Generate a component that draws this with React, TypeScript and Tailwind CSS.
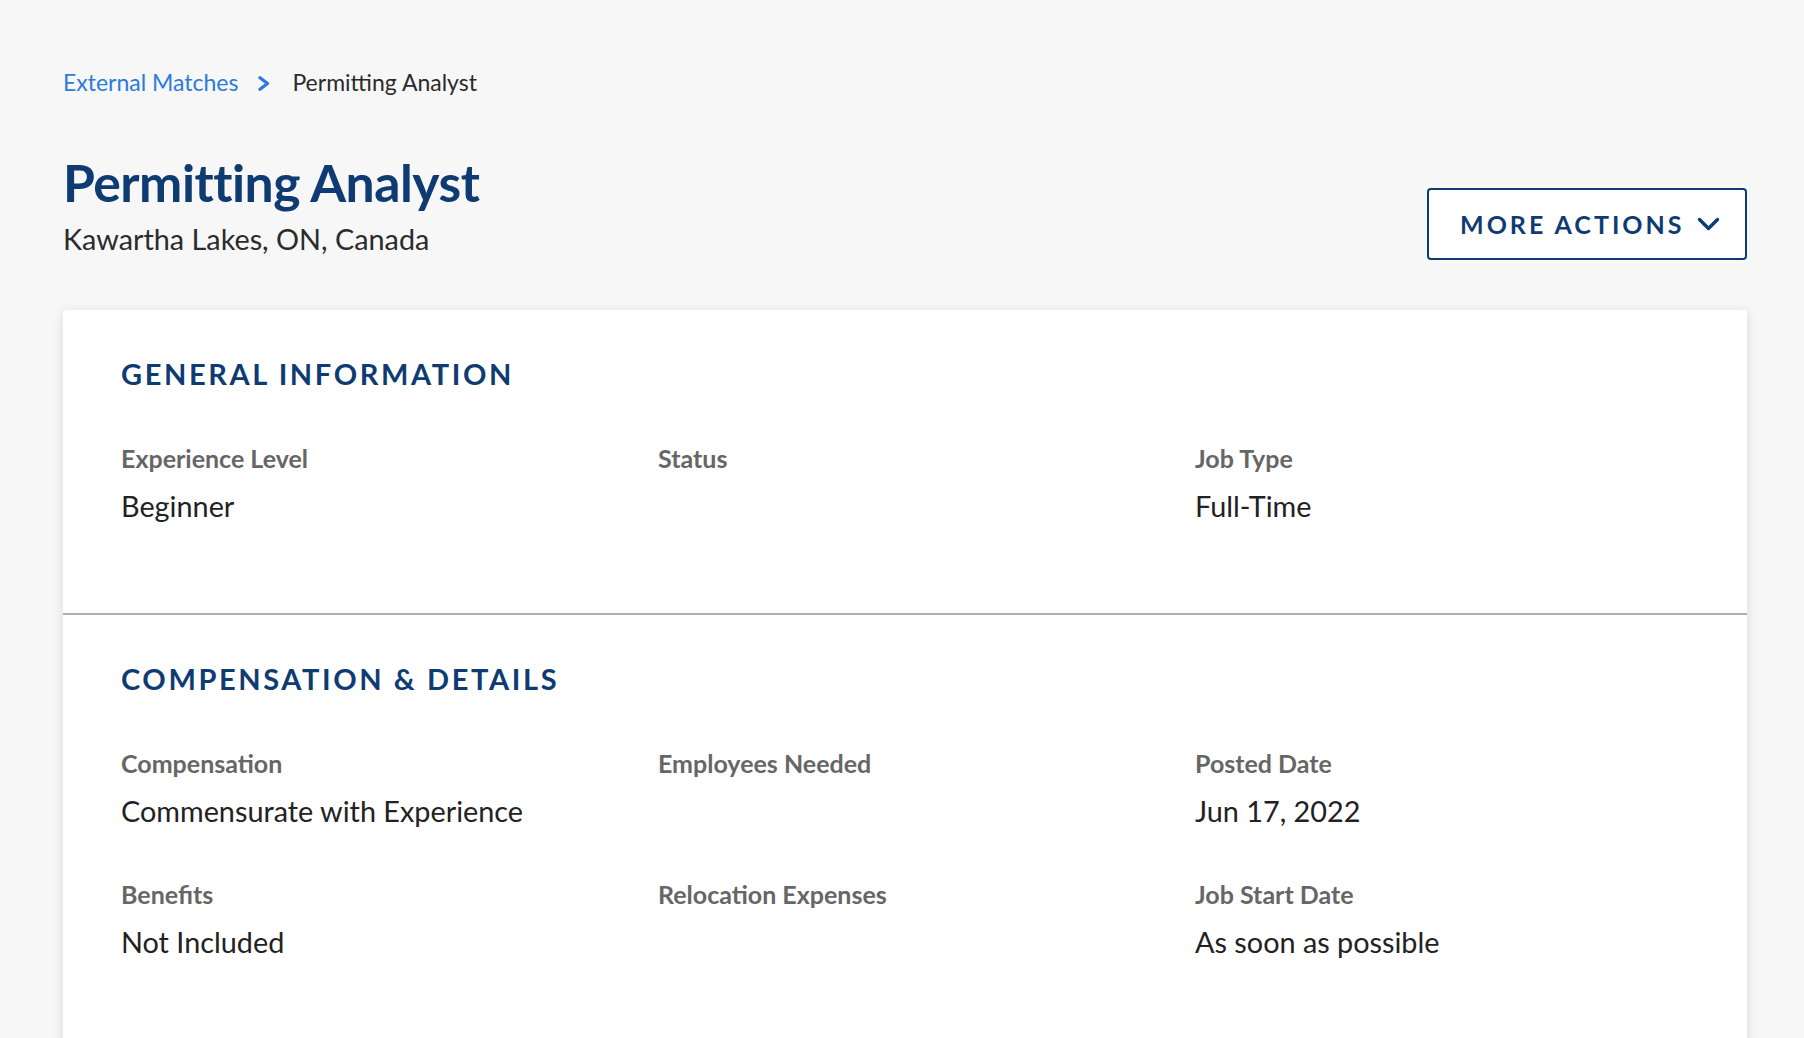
type Field = { label: string; value?: string };

const general: Field[] = [
  { label: 'Experience Level', value: 'Beginner' },
  { label: 'Status' },
  { label: 'Job Type', value: 'Full-Time' },
];

const compensation: Field[] = [
  { label: 'Compensation', value: 'Commensurate with Experience' },
  { label: 'Employees Needed' },
  { label: 'Posted Date', value: 'Jun 17, 2022' },
  { label: 'Benefits', value: 'Not Included' },
  { label: 'Relocation Expenses' },
  { label: 'Job Start Date', value: 'As soon as possible' },
];

function Section({ title, fields, divided }: { title: string; fields: Field[]; divided?: boolean }) {
  return (
    <section className={`px-[58px] pt-[49px] pb-[90px] ${divided ? 'border-t-2 border-[#b0b0b0]' : ''}`}>
      <h2 className="text-[29px] font-bold tracking-[0.09em] text-[#0f3b73] leading-[29px]">{title}</h2>
      <div className="grid grid-cols-3 gap-x-[43px] gap-y-[51px] mt-[55px]">
        {fields.map((f) => (
          <div key={f.label}>
            <div className="text-[25px] font-bold text-[#666666] leading-[30px]">{f.label}</div>
            <div className="text-[28.8px] text-[#222222] leading-[34px] mt-[16px] min-h-[34px]">{f.value}</div>
          </div>
        ))}
      </div>
    </section>
  );
}

export default function App() {
  return (
    <div className="min-h-screen bg-[#f7f7f7] pl-[63px] pr-[57px] pt-[68px] font-['Lato',sans-serif]">
      <nav className="flex items-center text-[23px] leading-[28px]">
        <a href="#" className="text-[#2b7bd9]">External Matches</a>
        <svg className="ml-[19px] mr-[21px] mt-[2px]" width="14" height="15" viewBox="0 0 14 15" fill="none">
          <polyline points="3,1.8 10.5,7.5 3,13.2" stroke="#2b7bd9" strokeWidth="3.3" strokeLinecap="round" strokeLinejoin="round" />
        </svg>
        <span className="text-[#2b2b2b]">Permitting Analyst</span>
      </nav>

      <div className="flex items-start justify-between mt-[56px]">
        <div>
          <h1 className="text-[51.7px] font-bold text-[#0f3b73] leading-[60px] tracking-[-0.01em]">Permitting Analyst</h1>
          <p className="text-[28.8px] text-[#2b2b2b] leading-[36px] mt-[9px]">Kawartha Lakes, ON, Canada</p>
        </div>
        <button className="mt-[36px] flex items-center justify-between h-[72px] w-[320px] pl-[31px] pr-[25px] border-2 border-[#0f3b73] rounded-[4px] bg-white">
          <span className="text-[25px] font-bold tracking-[0.12em] text-[#0f3b73] leading-none">MORE ACTIONS</span>
          <svg width="23" height="15" viewBox="0 0 23 15" fill="none">
            <polyline points="2.5,2.5 11.5,11.5 20.5,2.5" stroke="#0f3b73" strokeWidth="3.4" strokeLinecap="round" strokeLinejoin="round" />
          </svg>
        </button>
      </div>

      <div className="mt-[50px] bg-white rounded-[4px] shadow-[0_2px_12px_rgba(0,0,0,0.12)]">
        <Section title="GENERAL INFORMATION" fields={general} />
        <Section title="COMPENSATION & DETAILS" fields={compensation} divided />
      </div>
    </div>
  );
}
